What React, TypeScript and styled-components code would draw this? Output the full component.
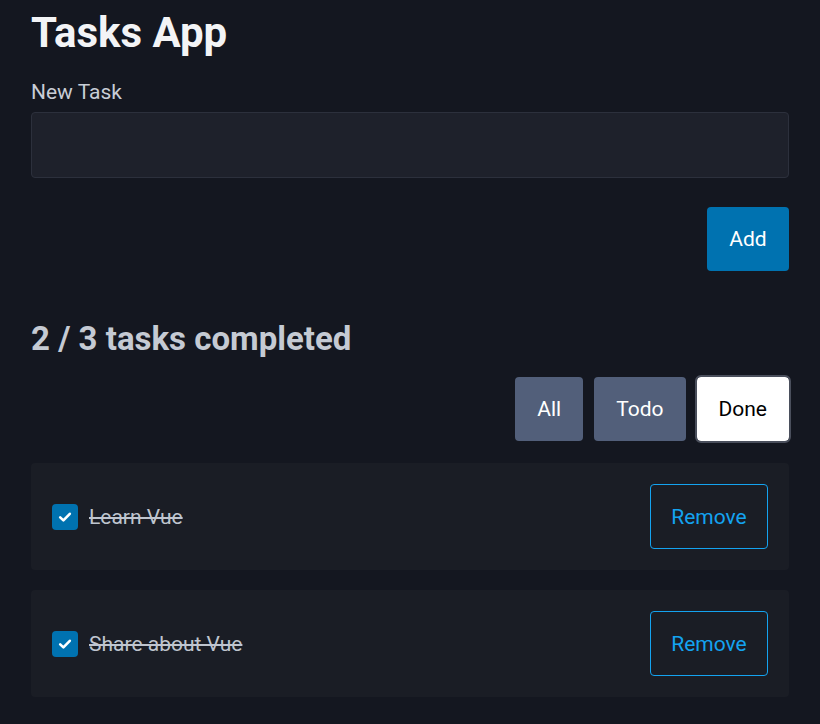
import React, { useState } from "react";
import styled, { createGlobalStyle } from "styled-components";

const Global = createGlobalStyle`
  html, body { margin: 0; padding: 0; background: #141720; }
  body { font-family: Roboto, "Noto Sans", "Liberation Sans", sans-serif; }
  * { box-sizing: border-box; }
`;

const Page = styled.div`
  padding: 8px 31px 20px;
  background: #141720;
  min-height: 724px;
`;

const Title = styled.h1`
  margin: 0;
  font-size: 42px;
  line-height: 50px;
  font-weight: 700;
  color: #f3f4f6;
`;

const Label = styled.label`
  display: block;
  margin-top: 22px;
  margin-bottom: 8px;
  font-size: 21px;
  line-height: 24px;
  color: #c8cdd6;
`;

const Input = styled.input`
  display: block;
  width: 100%;
  height: 66px;
  background: #1e212b;
  border: 1px solid #2c303c;
  border-radius: 4px;
  color: #e5e7eb;
  font-size: 21px;
  padding: 0 16px;
  outline: none;
  font-family: inherit;
`;

const Row = styled.div<{ $mt: number }>`
  display: flex;
  justify-content: flex-end;
  gap: 11px;
  margin-top: ${(p) => p.$mt}px;
`;

const AddButton = styled.button`
  width: 82px;
  height: 64px;
  border: none;
  border-radius: 4px;
  background: #0072b0;
  color: #ffffff;
  font-size: 21px;
  font-family: inherit;
`;

const Summary = styled.h2`
  margin: 48px 0 0;
  font-size: 33px;
  line-height: 40px;
  font-weight: 700;
  color: #c5cad3;
`;

const FilterButton = styled.button<{ $active?: boolean }>`
  height: 64px;
  padding: 0 22px;
  border: none;
  border-radius: 4px;
  font-size: 21px;
  font-family: inherit;
  background: ${(p) => (p.$active ? "#ffffff" : "#525f7a")};
  color: ${(p) => (p.$active ? "#000000" : "#ffffff")};
  outline: ${(p) => (p.$active ? "2px solid #4a4f5c" : "none")};
`;

const List = styled.ul`
  list-style: none;
  margin: 22px 0 0;
  padding: 0;
  display: flex;
  flex-direction: column;
  gap: 20px;
`;

const Card = styled.li`
  display: flex;
  align-items: center;
  justify-content: space-between;
  padding: 21px;
  background: #1a1d25;
  border-radius: 4px;
`;

const CheckLabel = styled.label`
  display: flex;
  align-items: center;
  gap: 11px;
  font-size: 21px;
  color: #bfc5cf;
`;

const Box = styled.span`
  width: 26px;
  height: 26px;
  border-radius: 4px;
  background: #0072b0;
  display: flex;
  align-items: center;
  justify-content: center;
`;

const TaskText = styled.span<{ $done: boolean }>`
  text-decoration: ${(p) => (p.$done ? "line-through" : "none")};
`;

const RemoveButton = styled.button`
  width: 118px;
  height: 65px;
  background: transparent;
  border: 1px solid #14a3f0;
  border-radius: 4px;
  color: #14a3f0;
  font-size: 21px;
  font-family: inherit;
`;

const tasks = [
  { id: 1, name: "Learn Vue", done: true },
  { id: 2, name: "Share about Vue", done: true },
];

export default function App() {
  const [value, setValue] = useState("");
  return (
    <Page>
      <Global />
      <Title>Tasks App</Title>
      <Label htmlFor="new-task">New Task</Label>
      <Input id="new-task" value={value} onChange={(e) => setValue(e.target.value)} />
      <Row $mt={29}>
        <AddButton>Add</AddButton>
      </Row>
      <Summary>2 / 3 tasks completed</Summary>
      <Row $mt={18}>
        <FilterButton>All</FilterButton>
        <FilterButton>Todo</FilterButton>
        <FilterButton $active>Done</FilterButton>
      </Row>
      <List>
        {tasks.map((t) => (
          <Card key={t.id}>
            <CheckLabel>
              <Box>
                <svg width="16" height="16" viewBox="0 0 16 16" fill="none">
                  <path d="M3.2 8.4 L6.4 11.4 L12.8 4.8" stroke="#ffffff" strokeWidth="2.6" strokeLinecap="round" strokeLinejoin="round" />
                </svg>
              </Box>
              <TaskText $done={t.done}>{t.name}</TaskText>
            </CheckLabel>
            <RemoveButton>Remove</RemoveButton>
          </Card>
        ))}
      </List>
    </Page>
  );
}
